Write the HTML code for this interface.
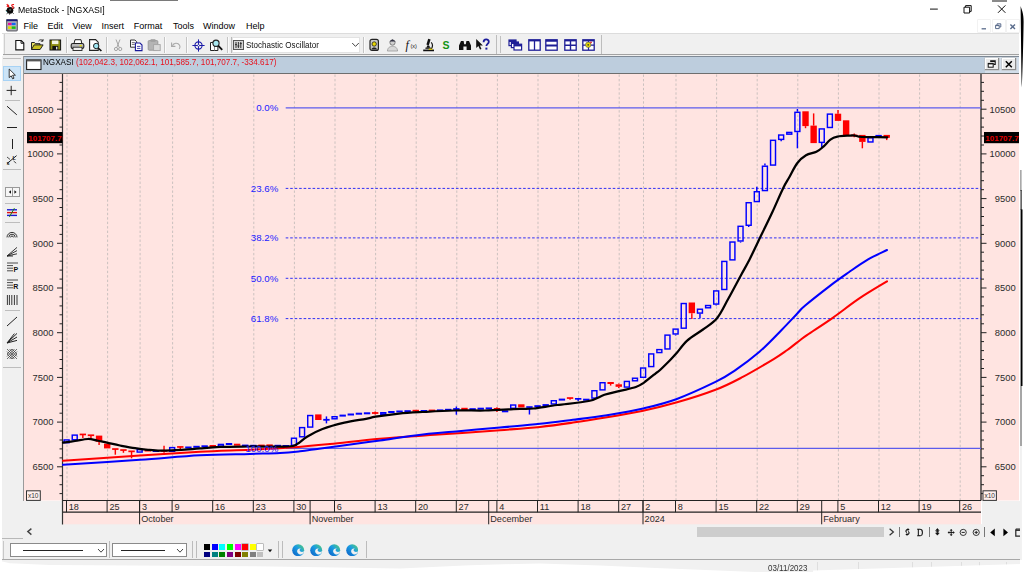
<!DOCTYPE html>
<html><head><meta charset="utf-8"><title>MetaStock - [NGXASI]</title>
<style>
html,body{margin:0;padding:0;background:#fff;}
html{width:1024px;height:572px;overflow:hidden}
body{width:1024px;height:572px;overflow:hidden;position:relative;font-family:"Liberation Sans",sans-serif;font-size:9px;color:#000}
.abs{position:absolute}
.t{position:absolute;white-space:nowrap;line-height:1}
</style></head><body>
<div class="abs" style="left:3px;top:33.6px;width:1016.4px;height:22.4px;background:#f0f0f0;"></div>
<div class="abs" style="left:0px;top:33.2px;width:1019.4px;height:0.8px;background:#dcdcdc;"></div>
<div class="abs" style="left:3px;top:54px;width:1016.4px;height:1.2px;background:#a2a2a2;"></div>
<div class="abs" style="left:2px;top:55.6px;width:22px;height:483px;background:#f0f0f0;"></div>
<div class="abs" style="left:23.2px;top:55.6px;width:0.9px;height:445px;background:#9a9a9a;"></div>
<div class="abs" style="left:2px;top:524.3px;width:1018.3px;height:36px;background:#f0f0f0;"></div>
<div class="abs" style="left:981.6px;top:500.5px;width:38px;height:24px;background:#f0f0f0;"></div>
<div class="abs" style="left:24px;top:500.5px;width:38px;height:24px;background:#f0f0f0;"></div>
<div class="abs" style="left:0px;top:560px;width:1020.3px;height:12px;background:#f1f1f1;"></div>
<div class="abs" style="left:0px;top:559.2px;width:1020.3px;height:0.9px;background:#a8a8a8;"></div>
<div class="abs" style="left:24px;top:55.8px;width:995.4px;height:17px;background:#bdcddd;"></div>
<div class="abs" style="left:984.5px;top:55.8px;width:34.9px;height:17px;background:#d3deea;"></div>
<svg id="chart" width="1024" height="572" viewBox="0 0 1024 572" style="position:absolute;left:0;top:0">
<style>.dt{font:9.1px "Liberation Sans",sans-serif;fill:#2b2b2b} .ax{font:9.4px "Liberation Sans",sans-serif;fill:#2b2b2b} .fib{font:9.7px "Liberation Sans",sans-serif;fill:#1c1cff}</style>
<rect x="24" y="73.5" width="995" height="427.0" fill="#ffe4e1"/>
<line x1="67.0" x2="67.0" y1="74.5" y2="500.5" stroke="#cbc1bf" stroke-width="1" stroke-dasharray="2.4 2.06"/>
<line x1="107.6" x2="107.6" y1="74.5" y2="500.5" stroke="#cbc1bf" stroke-width="1" stroke-dasharray="2.4 2.06"/>
<line x1="140.1" x2="140.1" y1="74.5" y2="500.5" stroke="#cbc1bf" stroke-width="1" stroke-dasharray="2.4 2.06"/>
<line x1="172.6" x2="172.6" y1="74.5" y2="500.5" stroke="#cbc1bf" stroke-width="1" stroke-dasharray="2.4 2.06"/>
<line x1="213.2" x2="213.2" y1="74.5" y2="500.5" stroke="#cbc1bf" stroke-width="1" stroke-dasharray="2.4 2.06"/>
<line x1="253.8" x2="253.8" y1="74.5" y2="500.5" stroke="#cbc1bf" stroke-width="1" stroke-dasharray="2.4 2.06"/>
<line x1="294.4" x2="294.4" y1="74.5" y2="500.5" stroke="#cbc1bf" stroke-width="1" stroke-dasharray="2.4 2.06"/>
<line x1="335.0" x2="335.0" y1="74.5" y2="500.5" stroke="#cbc1bf" stroke-width="1" stroke-dasharray="2.4 2.06"/>
<line x1="375.6" x2="375.6" y1="74.5" y2="500.5" stroke="#cbc1bf" stroke-width="1" stroke-dasharray="2.4 2.06"/>
<line x1="416.2" x2="416.2" y1="74.5" y2="500.5" stroke="#cbc1bf" stroke-width="1" stroke-dasharray="2.4 2.06"/>
<line x1="456.8" x2="456.8" y1="74.5" y2="500.5" stroke="#cbc1bf" stroke-width="1" stroke-dasharray="2.4 2.06"/>
<line x1="497.4" x2="497.4" y1="74.5" y2="500.5" stroke="#cbc1bf" stroke-width="1" stroke-dasharray="2.4 2.06"/>
<line x1="538.0" x2="538.0" y1="74.5" y2="500.5" stroke="#cbc1bf" stroke-width="1" stroke-dasharray="2.4 2.06"/>
<line x1="578.6" x2="578.6" y1="74.5" y2="500.5" stroke="#cbc1bf" stroke-width="1" stroke-dasharray="2.4 2.06"/>
<line x1="619.2" x2="619.2" y1="74.5" y2="500.5" stroke="#cbc1bf" stroke-width="1" stroke-dasharray="2.4 2.06"/>
<line x1="643.5" x2="643.5" y1="74.5" y2="500.5" stroke="#cbc1bf" stroke-width="1" stroke-dasharray="2.4 2.06"/>
<line x1="676.0" x2="676.0" y1="74.5" y2="500.5" stroke="#cbc1bf" stroke-width="1" stroke-dasharray="2.4 2.06"/>
<line x1="716.6" x2="716.6" y1="74.5" y2="500.5" stroke="#cbc1bf" stroke-width="1" stroke-dasharray="2.4 2.06"/>
<line x1="757.2" x2="757.2" y1="74.5" y2="500.5" stroke="#cbc1bf" stroke-width="1" stroke-dasharray="2.4 2.06"/>
<line x1="797.8" x2="797.8" y1="74.5" y2="500.5" stroke="#cbc1bf" stroke-width="1" stroke-dasharray="2.4 2.06"/>
<line x1="838.4" x2="838.4" y1="74.5" y2="500.5" stroke="#cbc1bf" stroke-width="1" stroke-dasharray="2.4 2.06"/>
<line x1="879.0" x2="879.0" y1="74.5" y2="500.5" stroke="#cbc1bf" stroke-width="1" stroke-dasharray="2.4 2.06"/>
<line x1="919.6" x2="919.6" y1="74.5" y2="500.5" stroke="#cbc1bf" stroke-width="1" stroke-dasharray="2.4 2.06"/>
<line x1="960.2" x2="960.2" y1="74.5" y2="500.5" stroke="#cbc1bf" stroke-width="1" stroke-dasharray="2.4 2.06"/>
<rect x="62.5" y="500.5" width="918.5" height="23.799999999999955" fill="#ffe4e1"/>
<line x1="62.5" x2="981.0" y1="500.5" y2="500.5" stroke="#222" stroke-width="1.2"/>
<line x1="62.5" x2="981.0" y1="512.2" y2="512.2" stroke="#222" stroke-width="1.2"/>
<line x1="66.5" x2="66.5" y1="500.5" y2="512.2" stroke="#222" stroke-width="1"/>
<text x="68.8" y="510.3" class="dt">18</text>
<line x1="107.1" x2="107.1" y1="500.5" y2="512.2" stroke="#222" stroke-width="1"/>
<text x="109.4" y="510.3" class="dt">25</text>
<line x1="139.6" x2="139.6" y1="500.5" y2="512.2" stroke="#222" stroke-width="1"/>
<text x="141.9" y="510.3" class="dt">3</text>
<line x1="172.1" x2="172.1" y1="500.5" y2="512.2" stroke="#222" stroke-width="1"/>
<text x="174.4" y="510.3" class="dt">9</text>
<line x1="212.7" x2="212.7" y1="500.5" y2="512.2" stroke="#222" stroke-width="1"/>
<text x="215.0" y="510.3" class="dt">16</text>
<line x1="253.3" x2="253.3" y1="500.5" y2="512.2" stroke="#222" stroke-width="1"/>
<text x="255.6" y="510.3" class="dt">23</text>
<line x1="293.9" x2="293.9" y1="500.5" y2="512.2" stroke="#222" stroke-width="1"/>
<text x="296.2" y="510.3" class="dt">30</text>
<line x1="334.5" x2="334.5" y1="500.5" y2="512.2" stroke="#222" stroke-width="1"/>
<text x="336.8" y="510.3" class="dt">6</text>
<line x1="375.1" x2="375.1" y1="500.5" y2="512.2" stroke="#222" stroke-width="1"/>
<text x="377.4" y="510.3" class="dt">13</text>
<line x1="415.7" x2="415.7" y1="500.5" y2="512.2" stroke="#222" stroke-width="1"/>
<text x="418.0" y="510.3" class="dt">20</text>
<line x1="456.3" x2="456.3" y1="500.5" y2="512.2" stroke="#222" stroke-width="1"/>
<text x="458.6" y="510.3" class="dt">27</text>
<line x1="496.9" x2="496.9" y1="500.5" y2="512.2" stroke="#222" stroke-width="1"/>
<text x="499.2" y="510.3" class="dt">4</text>
<line x1="537.5" x2="537.5" y1="500.5" y2="512.2" stroke="#222" stroke-width="1"/>
<text x="539.8" y="510.3" class="dt">11</text>
<line x1="578.1" x2="578.1" y1="500.5" y2="512.2" stroke="#222" stroke-width="1"/>
<text x="580.4" y="510.3" class="dt">18</text>
<line x1="618.7" x2="618.7" y1="500.5" y2="512.2" stroke="#222" stroke-width="1"/>
<text x="621.0" y="510.3" class="dt">27</text>
<line x1="643.0" x2="643.0" y1="500.5" y2="512.2" stroke="#222" stroke-width="1"/>
<text x="645.3" y="510.3" class="dt">2</text>
<line x1="675.5" x2="675.5" y1="500.5" y2="512.2" stroke="#222" stroke-width="1"/>
<text x="677.8" y="510.3" class="dt">8</text>
<line x1="716.1" x2="716.1" y1="500.5" y2="512.2" stroke="#222" stroke-width="1"/>
<text x="718.4" y="510.3" class="dt">15</text>
<line x1="756.7" x2="756.7" y1="500.5" y2="512.2" stroke="#222" stroke-width="1"/>
<text x="759.0" y="510.3" class="dt">22</text>
<line x1="797.3" x2="797.3" y1="500.5" y2="512.2" stroke="#222" stroke-width="1"/>
<text x="799.6" y="510.3" class="dt">29</text>
<line x1="837.9" x2="837.9" y1="500.5" y2="512.2" stroke="#222" stroke-width="1"/>
<text x="840.2" y="510.3" class="dt">5</text>
<line x1="878.5" x2="878.5" y1="500.5" y2="512.2" stroke="#222" stroke-width="1"/>
<text x="880.8" y="510.3" class="dt">12</text>
<line x1="919.1" x2="919.1" y1="500.5" y2="512.2" stroke="#222" stroke-width="1"/>
<text x="921.4" y="510.3" class="dt">19</text>
<line x1="959.7" x2="959.7" y1="500.5" y2="512.2" stroke="#222" stroke-width="1"/>
<text x="962.0" y="510.3" class="dt">26</text>
<line x1="139.6" x2="139.6" y1="500.5" y2="524.3" stroke="#222" stroke-width="1"/>
<text x="141.2" y="522.3" class="dt">October</text>
<line x1="310.1" x2="310.1" y1="500.5" y2="524.3" stroke="#222" stroke-width="1"/>
<text x="311.7" y="522.3" class="dt">November</text>
<line x1="488.7" x2="488.7" y1="500.5" y2="524.3" stroke="#222" stroke-width="1"/>
<text x="490.3" y="522.3" class="dt">December</text>
<line x1="643.0" x2="643.0" y1="500.5" y2="524.3" stroke="#222" stroke-width="1"/>
<text x="644.6" y="522.3" class="dt">2024</text>
<line x1="821.7" x2="821.7" y1="500.5" y2="524.3" stroke="#222" stroke-width="1"/>
<text x="823.3" y="522.3" class="dt">February</text>
<line x1="62.5" x2="62.5" y1="73.5" y2="524.5" stroke="#333" stroke-width="1.2"/>
<line x1="981.0" x2="981.0" y1="73.5" y2="500.5" stroke="#222" stroke-width="1.3"/>
<line x1="59.5" x2="62.5" y1="493.6" y2="493.6" stroke="#222" stroke-width="1"/>
<line x1="981.0" x2="984.0" y1="493.6" y2="493.6" stroke="#222" stroke-width="1"/>
<line x1="59.5" x2="62.5" y1="484.7" y2="484.7" stroke="#222" stroke-width="1"/>
<line x1="981.0" x2="984.0" y1="484.7" y2="484.7" stroke="#222" stroke-width="1"/>
<line x1="59.5" x2="62.5" y1="475.7" y2="475.7" stroke="#222" stroke-width="1"/>
<line x1="981.0" x2="984.0" y1="475.7" y2="475.7" stroke="#222" stroke-width="1"/>
<line x1="57.0" x2="62.5" y1="466.8" y2="466.8" stroke="#222" stroke-width="1"/>
<line x1="981.0" x2="986.5" y1="466.8" y2="466.8" stroke="#222" stroke-width="1"/>
<text x="53.4" y="470.1" text-anchor="end" class="ax">6500</text>
<text x="1015.6" y="470.1" text-anchor="end" class="ax">6500</text>
<line x1="59.5" x2="62.5" y1="457.9" y2="457.9" stroke="#222" stroke-width="1"/>
<line x1="981.0" x2="984.0" y1="457.9" y2="457.9" stroke="#222" stroke-width="1"/>
<line x1="59.5" x2="62.5" y1="448.9" y2="448.9" stroke="#222" stroke-width="1"/>
<line x1="981.0" x2="984.0" y1="448.9" y2="448.9" stroke="#222" stroke-width="1"/>
<line x1="59.5" x2="62.5" y1="440.0" y2="440.0" stroke="#222" stroke-width="1"/>
<line x1="981.0" x2="984.0" y1="440.0" y2="440.0" stroke="#222" stroke-width="1"/>
<line x1="59.5" x2="62.5" y1="431.0" y2="431.0" stroke="#222" stroke-width="1"/>
<line x1="981.0" x2="984.0" y1="431.0" y2="431.0" stroke="#222" stroke-width="1"/>
<line x1="57.0" x2="62.5" y1="422.1" y2="422.1" stroke="#222" stroke-width="1"/>
<line x1="981.0" x2="986.5" y1="422.1" y2="422.1" stroke="#222" stroke-width="1"/>
<text x="53.4" y="425.4" text-anchor="end" class="ax">7000</text>
<text x="1015.6" y="425.4" text-anchor="end" class="ax">7000</text>
<line x1="59.5" x2="62.5" y1="413.2" y2="413.2" stroke="#222" stroke-width="1"/>
<line x1="981.0" x2="984.0" y1="413.2" y2="413.2" stroke="#222" stroke-width="1"/>
<line x1="59.5" x2="62.5" y1="404.2" y2="404.2" stroke="#222" stroke-width="1"/>
<line x1="981.0" x2="984.0" y1="404.2" y2="404.2" stroke="#222" stroke-width="1"/>
<line x1="59.5" x2="62.5" y1="395.3" y2="395.3" stroke="#222" stroke-width="1"/>
<line x1="981.0" x2="984.0" y1="395.3" y2="395.3" stroke="#222" stroke-width="1"/>
<line x1="59.5" x2="62.5" y1="386.3" y2="386.3" stroke="#222" stroke-width="1"/>
<line x1="981.0" x2="984.0" y1="386.3" y2="386.3" stroke="#222" stroke-width="1"/>
<line x1="57.0" x2="62.5" y1="377.4" y2="377.4" stroke="#222" stroke-width="1"/>
<line x1="981.0" x2="986.5" y1="377.4" y2="377.4" stroke="#222" stroke-width="1"/>
<text x="53.4" y="380.7" text-anchor="end" class="ax">7500</text>
<text x="1015.6" y="380.7" text-anchor="end" class="ax">7500</text>
<line x1="59.5" x2="62.5" y1="368.5" y2="368.5" stroke="#222" stroke-width="1"/>
<line x1="981.0" x2="984.0" y1="368.5" y2="368.5" stroke="#222" stroke-width="1"/>
<line x1="59.5" x2="62.5" y1="359.5" y2="359.5" stroke="#222" stroke-width="1"/>
<line x1="981.0" x2="984.0" y1="359.5" y2="359.5" stroke="#222" stroke-width="1"/>
<line x1="59.5" x2="62.5" y1="350.6" y2="350.6" stroke="#222" stroke-width="1"/>
<line x1="981.0" x2="984.0" y1="350.6" y2="350.6" stroke="#222" stroke-width="1"/>
<line x1="59.5" x2="62.5" y1="341.6" y2="341.6" stroke="#222" stroke-width="1"/>
<line x1="981.0" x2="984.0" y1="341.6" y2="341.6" stroke="#222" stroke-width="1"/>
<line x1="57.0" x2="62.5" y1="332.7" y2="332.7" stroke="#222" stroke-width="1"/>
<line x1="981.0" x2="986.5" y1="332.7" y2="332.7" stroke="#222" stroke-width="1"/>
<text x="53.4" y="336.0" text-anchor="end" class="ax">8000</text>
<text x="1015.6" y="336.0" text-anchor="end" class="ax">8000</text>
<line x1="59.5" x2="62.5" y1="323.8" y2="323.8" stroke="#222" stroke-width="1"/>
<line x1="981.0" x2="984.0" y1="323.8" y2="323.8" stroke="#222" stroke-width="1"/>
<line x1="59.5" x2="62.5" y1="314.8" y2="314.8" stroke="#222" stroke-width="1"/>
<line x1="981.0" x2="984.0" y1="314.8" y2="314.8" stroke="#222" stroke-width="1"/>
<line x1="59.5" x2="62.5" y1="305.9" y2="305.9" stroke="#222" stroke-width="1"/>
<line x1="981.0" x2="984.0" y1="305.9" y2="305.9" stroke="#222" stroke-width="1"/>
<line x1="59.5" x2="62.5" y1="296.9" y2="296.9" stroke="#222" stroke-width="1"/>
<line x1="981.0" x2="984.0" y1="296.9" y2="296.9" stroke="#222" stroke-width="1"/>
<line x1="57.0" x2="62.5" y1="288.0" y2="288.0" stroke="#222" stroke-width="1"/>
<line x1="981.0" x2="986.5" y1="288.0" y2="288.0" stroke="#222" stroke-width="1"/>
<text x="53.4" y="291.3" text-anchor="end" class="ax">8500</text>
<text x="1015.6" y="291.3" text-anchor="end" class="ax">8500</text>
<line x1="59.5" x2="62.5" y1="279.1" y2="279.1" stroke="#222" stroke-width="1"/>
<line x1="981.0" x2="984.0" y1="279.1" y2="279.1" stroke="#222" stroke-width="1"/>
<line x1="59.5" x2="62.5" y1="270.1" y2="270.1" stroke="#222" stroke-width="1"/>
<line x1="981.0" x2="984.0" y1="270.1" y2="270.1" stroke="#222" stroke-width="1"/>
<line x1="59.5" x2="62.5" y1="261.2" y2="261.2" stroke="#222" stroke-width="1"/>
<line x1="981.0" x2="984.0" y1="261.2" y2="261.2" stroke="#222" stroke-width="1"/>
<line x1="59.5" x2="62.5" y1="252.2" y2="252.2" stroke="#222" stroke-width="1"/>
<line x1="981.0" x2="984.0" y1="252.2" y2="252.2" stroke="#222" stroke-width="1"/>
<line x1="57.0" x2="62.5" y1="243.3" y2="243.3" stroke="#222" stroke-width="1"/>
<line x1="981.0" x2="986.5" y1="243.3" y2="243.3" stroke="#222" stroke-width="1"/>
<text x="53.4" y="246.6" text-anchor="end" class="ax">9000</text>
<text x="1015.6" y="246.6" text-anchor="end" class="ax">9000</text>
<line x1="59.5" x2="62.5" y1="234.4" y2="234.4" stroke="#222" stroke-width="1"/>
<line x1="981.0" x2="984.0" y1="234.4" y2="234.4" stroke="#222" stroke-width="1"/>
<line x1="59.5" x2="62.5" y1="225.4" y2="225.4" stroke="#222" stroke-width="1"/>
<line x1="981.0" x2="984.0" y1="225.4" y2="225.4" stroke="#222" stroke-width="1"/>
<line x1="59.5" x2="62.5" y1="216.5" y2="216.5" stroke="#222" stroke-width="1"/>
<line x1="981.0" x2="984.0" y1="216.5" y2="216.5" stroke="#222" stroke-width="1"/>
<line x1="59.5" x2="62.5" y1="207.5" y2="207.5" stroke="#222" stroke-width="1"/>
<line x1="981.0" x2="984.0" y1="207.5" y2="207.5" stroke="#222" stroke-width="1"/>
<line x1="57.0" x2="62.5" y1="198.6" y2="198.6" stroke="#222" stroke-width="1"/>
<line x1="981.0" x2="986.5" y1="198.6" y2="198.6" stroke="#222" stroke-width="1"/>
<text x="53.4" y="201.9" text-anchor="end" class="ax">9500</text>
<text x="1015.6" y="201.9" text-anchor="end" class="ax">9500</text>
<line x1="59.5" x2="62.5" y1="189.7" y2="189.7" stroke="#222" stroke-width="1"/>
<line x1="981.0" x2="984.0" y1="189.7" y2="189.7" stroke="#222" stroke-width="1"/>
<line x1="59.5" x2="62.5" y1="180.7" y2="180.7" stroke="#222" stroke-width="1"/>
<line x1="981.0" x2="984.0" y1="180.7" y2="180.7" stroke="#222" stroke-width="1"/>
<line x1="59.5" x2="62.5" y1="171.8" y2="171.8" stroke="#222" stroke-width="1"/>
<line x1="981.0" x2="984.0" y1="171.8" y2="171.8" stroke="#222" stroke-width="1"/>
<line x1="59.5" x2="62.5" y1="162.8" y2="162.8" stroke="#222" stroke-width="1"/>
<line x1="981.0" x2="984.0" y1="162.8" y2="162.8" stroke="#222" stroke-width="1"/>
<line x1="57.0" x2="62.5" y1="153.9" y2="153.9" stroke="#222" stroke-width="1"/>
<line x1="981.0" x2="986.5" y1="153.9" y2="153.9" stroke="#222" stroke-width="1"/>
<text x="53.4" y="157.2" text-anchor="end" class="ax">10000</text>
<text x="1015.6" y="157.2" text-anchor="end" class="ax">10000</text>
<line x1="59.5" x2="62.5" y1="145.0" y2="145.0" stroke="#222" stroke-width="1"/>
<line x1="981.0" x2="984.0" y1="145.0" y2="145.0" stroke="#222" stroke-width="1"/>
<line x1="59.5" x2="62.5" y1="136.0" y2="136.0" stroke="#222" stroke-width="1"/>
<line x1="981.0" x2="984.0" y1="136.0" y2="136.0" stroke="#222" stroke-width="1"/>
<line x1="59.5" x2="62.5" y1="127.1" y2="127.1" stroke="#222" stroke-width="1"/>
<line x1="981.0" x2="984.0" y1="127.1" y2="127.1" stroke="#222" stroke-width="1"/>
<line x1="59.5" x2="62.5" y1="118.1" y2="118.1" stroke="#222" stroke-width="1"/>
<line x1="981.0" x2="984.0" y1="118.1" y2="118.1" stroke="#222" stroke-width="1"/>
<line x1="57.0" x2="62.5" y1="109.2" y2="109.2" stroke="#222" stroke-width="1"/>
<line x1="981.0" x2="986.5" y1="109.2" y2="109.2" stroke="#222" stroke-width="1"/>
<text x="53.4" y="112.5" text-anchor="end" class="ax">10500</text>
<text x="1015.6" y="112.5" text-anchor="end" class="ax">10500</text>
<line x1="59.5" x2="62.5" y1="100.3" y2="100.3" stroke="#222" stroke-width="1"/>
<line x1="981.0" x2="984.0" y1="100.3" y2="100.3" stroke="#222" stroke-width="1"/>
<line x1="59.5" x2="62.5" y1="91.3" y2="91.3" stroke="#222" stroke-width="1"/>
<line x1="981.0" x2="984.0" y1="91.3" y2="91.3" stroke="#222" stroke-width="1"/>
<line x1="59.5" x2="62.5" y1="82.4" y2="82.4" stroke="#222" stroke-width="1"/>
<line x1="981.0" x2="984.0" y1="82.4" y2="82.4" stroke="#222" stroke-width="1"/>
<line x1="285.7" x2="981.0" y1="107.8" y2="107.8" stroke="#5c5cec" stroke-width="1.35"/>
<text x="278.3" y="111.2" text-anchor="end" class="fib">0.0%</text>
<line x1="285.7" x2="981.0" y1="188.4" y2="188.4" stroke="#3030f4" stroke-width="1" stroke-dasharray="2.6 1.88"/>
<text x="278.3" y="191.8" text-anchor="end" class="fib">23.6%</text>
<line x1="285.7" x2="981.0" y1="237.9" y2="237.9" stroke="#3030f4" stroke-width="1" stroke-dasharray="2.6 1.88"/>
<text x="278.3" y="241.3" text-anchor="end" class="fib">38.2%</text>
<line x1="285.7" x2="981.0" y1="278.3" y2="278.3" stroke="#3030f4" stroke-width="1" stroke-dasharray="2.6 1.88"/>
<text x="278.3" y="281.7" text-anchor="end" class="fib">50.0%</text>
<line x1="285.7" x2="981.0" y1="318.6" y2="318.6" stroke="#3030f4" stroke-width="1" stroke-dasharray="2.6 1.88"/>
<text x="278.3" y="322.0" text-anchor="end" class="fib">61.8%</text>
<line x1="285.7" x2="981.0" y1="448.4" y2="448.4" stroke="#5c5cec" stroke-width="1.35"/>
<g>
<rect x="64.12" y="439.93" width="4.95" height="2.75" fill="none" stroke="#0000ff" stroke-width="1.45"/>
<rect x="72.24" y="435.12" width="4.95" height="4.65" fill="none" stroke="#0000ff" stroke-width="1.45"/>
<rect x="79.64" y="433.60" width="6.40" height="1.7" fill="#ff0000"/>
<line x1="82.84" x2="82.84" y1="434.40" y2="438.00" stroke="#ff0000" stroke-width="1.45"/>
<rect x="87.76" y="434.40" width="6.40" height="1.7" fill="#ff0000"/>
<line x1="90.96" x2="90.96" y1="435.20" y2="438.40" stroke="#ff0000" stroke-width="1.45"/>
<rect x="95.88" y="435.60" width="6.40" height="6.30" fill="#ff0000"/>
<line x1="99.08" x2="99.08" y1="441.90" y2="445.00" stroke="#ff0000" stroke-width="1.45"/>
<rect x="104.00" y="443.70" width="6.40" height="4.70" fill="#ff0000"/>
<rect x="112.12" y="448.20" width="6.40" height="1.7" fill="#ff0000"/>
<line x1="115.32" x2="115.32" y1="449.00" y2="454.70" stroke="#ff0000" stroke-width="1.45"/>
<rect x="120.24" y="449.20" width="6.40" height="1.7" fill="#ff0000"/>
<line x1="123.44" x2="123.44" y1="450.00" y2="452.80" stroke="#ff0000" stroke-width="1.45"/>
<rect x="128.36" y="450.50" width="6.40" height="1.7" fill="#ff0000"/>
<line x1="131.56" x2="131.56" y1="451.30" y2="458.30" stroke="#ff0000" stroke-width="1.45"/>
<rect x="137.20" y="449.62" width="4.95" height="2.45" fill="none" stroke="#0000ff" stroke-width="1.45"/>
<rect x="144.60" y="449.50" width="6.40" height="2" fill="#ff0000"/>
<rect x="152.72" y="450.00" width="6.40" height="2" fill="#0000ff"/>
<rect x="160.84" y="449.90" width="6.40" height="1.8" fill="#ff0000"/>
<line x1="164.04" x2="164.04" y1="445.80" y2="452.80" stroke="#ff0000" stroke-width="1.45"/>
<rect x="169.69" y="447.62" width="4.95" height="3.65" fill="none" stroke="#0000ff" stroke-width="1.45"/>
<rect x="177.08" y="446.10" width="6.40" height="1.7" fill="#ff0000"/>
<line x1="180.28" x2="180.28" y1="446.90" y2="449.70" stroke="#ff0000" stroke-width="1.45"/>
<rect x="185.20" y="446.50" width="6.40" height="2" fill="#0000ff"/>
<rect x="193.32" y="445.80" width="6.40" height="2" fill="#0000ff"/>
<rect x="201.44" y="445.30" width="6.40" height="2" fill="#0000ff"/>
<rect x="209.56" y="445.00" width="6.40" height="2" fill="#ff0000"/>
<rect x="218.40" y="444.43" width="4.95" height="1.75" fill="none" stroke="#0000ff" stroke-width="1.45"/>
<rect x="225.80" y="443.00" width="6.40" height="2" fill="#0000ff"/>
<rect x="233.92" y="443.70" width="6.40" height="2" fill="#ff0000"/>
<rect x="242.04" y="444.60" width="6.40" height="2" fill="#0000ff"/>
<rect x="250.16" y="444.80" width="6.40" height="2" fill="#0000ff"/>
<rect x="258.28" y="444.60" width="6.40" height="2" fill="#ff0000"/>
<rect x="266.40" y="444.40" width="6.40" height="2" fill="#ff0000"/>
<rect x="274.52" y="444.80" width="6.40" height="2" fill="#0000ff"/>
<rect x="282.64" y="445.00" width="6.40" height="2" fill="#0000ff"/>
<rect x="291.49" y="438.23" width="4.95" height="7.05" fill="none" stroke="#0000ff" stroke-width="1.45"/>
<rect x="299.61" y="427.62" width="4.95" height="9.15" fill="none" stroke="#0000ff" stroke-width="1.45"/>
<rect x="307.73" y="415.53" width="4.95" height="11.55" fill="none" stroke="#0000ff" stroke-width="1.45"/>
<rect x="315.12" y="414.40" width="6.40" height="5.60" fill="#ff0000"/>
<rect x="323.24" y="418.90" width="6.40" height="1.8" fill="#0000ff"/>
<line x1="326.44" x2="326.44" y1="416.40" y2="423.40" stroke="#0000ff" stroke-width="1.45"/>
<rect x="332.09" y="416.73" width="4.95" height="2.05" fill="none" stroke="#0000ff" stroke-width="1.45"/>
<rect x="339.48" y="414.60" width="6.40" height="2" fill="#0000ff"/>
<rect x="347.60" y="413.50" width="6.40" height="2" fill="#0000ff"/>
<rect x="355.72" y="412.70" width="6.40" height="2" fill="#0000ff"/>
<rect x="363.84" y="412.30" width="6.40" height="2" fill="#0000ff"/>
<rect x="371.96" y="412.10" width="6.40" height="1.8" fill="#ff0000"/>
<line x1="375.16" x2="375.16" y1="411.50" y2="414.50" stroke="#ff0000" stroke-width="1.45"/>
<rect x="380.81" y="412.73" width="4.95" height="1.55" fill="none" stroke="#0000ff" stroke-width="1.45"/>
<rect x="388.20" y="411.00" width="6.40" height="2" fill="#0000ff"/>
<rect x="396.32" y="410.50" width="6.40" height="2" fill="#0000ff"/>
<rect x="404.44" y="410.20" width="6.40" height="2" fill="#0000ff"/>
<rect x="412.56" y="409.80" width="6.40" height="1.7" fill="#ff0000"/>
<line x1="415.76" x2="415.76" y1="410.60" y2="412.20" stroke="#ff0000" stroke-width="1.45"/>
<rect x="420.68" y="410.00" width="6.40" height="2" fill="#0000ff"/>
<rect x="428.80" y="409.60" width="6.40" height="2" fill="#ff0000"/>
<rect x="436.92" y="409.40" width="6.40" height="2" fill="#0000ff"/>
<rect x="445.04" y="408.80" width="6.40" height="2" fill="#0000ff"/>
<rect x="453.16" y="408.10" width="6.40" height="1.8" fill="#0000ff"/>
<line x1="456.36" x2="456.36" y1="406.50" y2="414.70" stroke="#0000ff" stroke-width="1.45"/>
<rect x="461.28" y="407.80" width="6.40" height="3.20" fill="#ff0000"/>
<rect x="469.40" y="408.20" width="6.40" height="2" fill="#0000ff"/>
<rect x="477.52" y="407.70" width="6.40" height="2" fill="#0000ff"/>
<rect x="485.64" y="407.40" width="6.40" height="2" fill="#0000ff"/>
<rect x="493.76" y="408.00" width="6.40" height="3.00" fill="#ff0000"/>
<line x1="496.96" x2="496.96" y1="407.30" y2="408.00" stroke="#ff0000" stroke-width="1.45"/>
<line x1="496.96" x2="496.96" y1="411.00" y2="412.00" stroke="#ff0000" stroke-width="1.45"/>
<rect x="501.88" y="410.30" width="6.40" height="2" fill="#0000ff"/>
<rect x="510.72" y="405.03" width="4.95" height="3.25" fill="none" stroke="#0000ff" stroke-width="1.45"/>
<rect x="518.12" y="404.30" width="6.40" height="3.10" fill="#ff0000"/>
<rect x="526.24" y="406.20" width="6.40" height="1.7" fill="#0000ff"/>
<line x1="529.44" x2="529.44" y1="407.00" y2="414.50" stroke="#0000ff" stroke-width="1.45"/>
<rect x="534.36" y="405.20" width="6.40" height="2" fill="#0000ff"/>
<rect x="542.48" y="404.10" width="6.40" height="2" fill="#0000ff"/>
<rect x="551.32" y="400.73" width="4.95" height="3.25" fill="none" stroke="#0000ff" stroke-width="1.45"/>
<rect x="558.72" y="398.60" width="6.40" height="2" fill="#0000ff"/>
<rect x="566.84" y="397.20" width="6.40" height="1.7" fill="#ff0000"/>
<line x1="570.04" x2="570.04" y1="398.00" y2="399.80" stroke="#ff0000" stroke-width="1.45"/>
<rect x="574.96" y="398.00" width="6.40" height="1.7" fill="#0000ff"/>
<line x1="578.16" x2="578.16" y1="398.80" y2="401.00" stroke="#0000ff" stroke-width="1.45"/>
<rect x="583.08" y="398.70" width="6.40" height="2" fill="#0000ff"/>
<rect x="591.92" y="390.73" width="4.95" height="7.35" fill="none" stroke="#0000ff" stroke-width="1.45"/>
<rect x="600.04" y="382.73" width="4.95" height="7.15" fill="none" stroke="#0000ff" stroke-width="1.45"/>
<rect x="607.44" y="382.00" width="6.40" height="2.00" fill="#ff0000"/>
<line x1="610.64" x2="610.64" y1="384.00" y2="385.60" stroke="#ff0000" stroke-width="1.45"/>
<rect x="615.56" y="384.30" width="6.40" height="2.50" fill="#ff0000"/>
<line x1="618.76" x2="618.76" y1="383.60" y2="384.30" stroke="#ff0000" stroke-width="1.45"/>
<line x1="618.76" x2="618.76" y1="386.80" y2="388.00" stroke="#ff0000" stroke-width="1.45"/>
<rect x="624.40" y="381.43" width="4.95" height="5.65" fill="none" stroke="#0000ff" stroke-width="1.45"/>
<rect x="632.52" y="378.23" width="4.95" height="2.55" fill="none" stroke="#0000ff" stroke-width="1.45"/>
<rect x="640.64" y="368.03" width="4.95" height="9.25" fill="none" stroke="#0000ff" stroke-width="1.45"/>
<rect x="648.76" y="353.93" width="4.95" height="12.65" fill="none" stroke="#0000ff" stroke-width="1.45"/>
<rect x="656.88" y="349.62" width="4.95" height="2.95" fill="none" stroke="#0000ff" stroke-width="1.45"/>
<rect x="665.00" y="335.12" width="4.95" height="13.85" fill="none" stroke="#0000ff" stroke-width="1.45"/>
<rect x="673.12" y="329.12" width="4.95" height="4.85" fill="none" stroke="#0000ff" stroke-width="1.45"/>
<line x1="675.60" x2="675.60" y1="334.70" y2="335.50" stroke="#0000ff" stroke-width="1.45"/>
<rect x="681.24" y="303.53" width="4.95" height="24.65" fill="none" stroke="#0000ff" stroke-width="1.45"/>
<rect x="688.64" y="302.50" width="6.40" height="10.70" fill="#ff0000"/>
<line x1="691.84" x2="691.84" y1="313.20" y2="319.00" stroke="#ff0000" stroke-width="1.45"/>
<rect x="697.48" y="309.23" width="4.95" height="3.85" fill="none" stroke="#0000ff" stroke-width="1.45"/>
<line x1="699.96" x2="699.96" y1="313.80" y2="317.90" stroke="#0000ff" stroke-width="1.45"/>
<rect x="705.60" y="305.53" width="4.95" height="2.25" fill="none" stroke="#0000ff" stroke-width="1.45"/>
<rect x="713.72" y="290.93" width="4.95" height="13.15" fill="none" stroke="#0000ff" stroke-width="1.45"/>
<line x1="716.20" x2="716.20" y1="304.80" y2="305.60" stroke="#0000ff" stroke-width="1.45"/>
<rect x="721.84" y="261.43" width="4.95" height="28.05" fill="none" stroke="#0000ff" stroke-width="1.45"/>
<rect x="729.96" y="242.03" width="4.95" height="17.85" fill="none" stroke="#0000ff" stroke-width="1.45"/>
<rect x="738.08" y="226.32" width="4.95" height="14.65" fill="none" stroke="#0000ff" stroke-width="1.45"/>
<line x1="740.56" x2="740.56" y1="241.70" y2="242.60" stroke="#0000ff" stroke-width="1.45"/>
<rect x="746.20" y="202.72" width="4.95" height="22.55" fill="none" stroke="#0000ff" stroke-width="1.45"/>
<line x1="748.68" x2="748.68" y1="226.00" y2="227.00" stroke="#0000ff" stroke-width="1.45"/>
<rect x="754.32" y="191.72" width="4.95" height="9.85" fill="none" stroke="#0000ff" stroke-width="1.45"/>
<line x1="756.80" x2="756.80" y1="186.70" y2="191.00" stroke="#0000ff" stroke-width="1.45"/>
<rect x="762.44" y="166.22" width="4.95" height="24.35" fill="none" stroke="#0000ff" stroke-width="1.45"/>
<line x1="764.92" x2="764.92" y1="163.40" y2="165.50" stroke="#0000ff" stroke-width="1.45"/>
<rect x="770.56" y="140.32" width="4.95" height="24.75" fill="none" stroke="#0000ff" stroke-width="1.45"/>
<rect x="778.68" y="135.03" width="4.95" height="4.35" fill="none" stroke="#0000ff" stroke-width="1.45"/>
<line x1="781.16" x2="781.16" y1="140.10" y2="141.20" stroke="#0000ff" stroke-width="1.45"/>
<rect x="786.80" y="132.42" width="4.95" height="1.75" fill="none" stroke="#0000ff" stroke-width="1.45"/>
<rect x="794.92" y="112.32" width="4.95" height="19.15" fill="none" stroke="#0000ff" stroke-width="1.45"/>
<line x1="797.40" x2="797.40" y1="109.00" y2="111.60" stroke="#0000ff" stroke-width="1.45"/>
<line x1="797.40" x2="797.40" y1="132.20" y2="148.30" stroke="#0000ff" stroke-width="1.45"/>
<rect x="802.32" y="111.30" width="6.40" height="14.80" fill="#ff0000"/>
<line x1="805.52" x2="805.52" y1="126.10" y2="128.20" stroke="#ff0000" stroke-width="1.45"/>
<rect x="810.44" y="125.60" width="6.40" height="17.50" fill="#ff0000"/>
<line x1="813.64" x2="813.64" y1="113.40" y2="125.60" stroke="#ff0000" stroke-width="1.45"/>
<rect x="819.28" y="128.92" width="4.95" height="13.45" fill="none" stroke="#0000ff" stroke-width="1.45"/>
<line x1="821.76" x2="821.76" y1="143.10" y2="148.30" stroke="#0000ff" stroke-width="1.45"/>
<rect x="827.40" y="114.12" width="4.95" height="13.35" fill="none" stroke="#0000ff" stroke-width="1.45"/>
<rect x="834.80" y="113.70" width="6.40" height="7.20" fill="#ff0000"/>
<line x1="838.00" x2="838.00" y1="109.90" y2="113.70" stroke="#ff0000" stroke-width="1.45"/>
<rect x="842.92" y="120.30" width="6.40" height="14.70" fill="#ff0000"/>
<rect x="851.04" y="134.60" width="6.40" height="1.8" fill="#ff0000"/>
<line x1="854.24" x2="854.24" y1="133.60" y2="137.20" stroke="#ff0000" stroke-width="1.45"/>
<rect x="859.16" y="134.90" width="6.40" height="7.00" fill="#ff0000"/>
<line x1="862.36" x2="862.36" y1="141.90" y2="148.30" stroke="#ff0000" stroke-width="1.45"/>
<rect x="868.00" y="137.72" width="4.95" height="4.25" fill="none" stroke="#0000ff" stroke-width="1.45"/>
<rect x="876.12" y="135.62" width="4.95" height="1.45" fill="none" stroke="#0000ff" stroke-width="1.45"/>
<rect x="883.52" y="134.90" width="6.40" height="2.90" fill="#ff0000"/>
<line x1="886.72" x2="886.72" y1="137.80" y2="140.10" stroke="#ff0000" stroke-width="1.45"/>
</g>
<path d="M63.0 460.8C75.8 459.9 117.2 457.1 140.0 455.6C162.8 454.1 181.7 452.8 200.0 451.8C218.3 450.8 235.0 450.5 250.0 449.8C265.0 449.1 276.7 448.6 290.0 447.6C303.3 446.6 315.0 445.5 330.0 444.0C345.0 442.5 361.9 440.3 380.0 438.7C398.1 437.1 418.6 436.0 438.6 434.6C458.6 433.2 483.1 431.5 500.0 430.2C516.9 428.9 527.8 428.2 540.0 426.9C552.2 425.6 561.8 424.2 573.0 422.6C584.2 421.0 595.5 419.2 607.0 417.3C618.5 415.4 630.5 413.4 642.0 411.0C653.5 408.6 664.0 406.1 676.2 402.6C688.5 399.1 704.5 394.0 715.5 389.8C726.5 385.6 732.6 382.3 742.3 377.2C752.0 372.1 766.2 363.6 773.7 359.1C781.2 354.6 782.9 353.1 787.3 350.0C791.7 346.9 796.7 342.7 800.0 340.2C803.3 337.7 801.9 338.6 807.3 334.9C812.7 331.2 823.7 324.2 832.4 318.1C841.1 312.0 850.6 304.3 859.7 298.2C868.8 292.1 882.5 284.2 887.0 281.4" fill="none" stroke="#ff0000" stroke-width="2.05" stroke-linejoin="round" stroke-linecap="round"/>
<path d="M63.0 464.8C75.8 464.0 117.2 461.4 140.0 459.8C162.8 458.2 181.7 456.3 200.0 455.3C218.3 454.3 236.7 454.3 250.0 453.9C263.3 453.5 271.7 453.4 280.0 453.0C288.3 452.6 293.5 452.0 300.0 451.3C306.5 450.6 311.5 449.7 319.0 448.7C326.5 447.7 334.8 446.6 345.0 445.2C355.2 443.8 368.3 442.0 380.0 440.4C391.7 438.8 402.3 436.9 415.0 435.4C427.7 433.9 441.8 432.7 456.0 431.4C470.2 430.1 486.0 428.8 500.0 427.5C514.0 426.2 527.8 425.1 540.0 423.8C552.2 422.5 561.8 421.2 573.0 419.8C584.2 418.4 595.5 417.1 607.0 415.2C618.5 413.3 630.5 411.4 642.0 408.7C653.5 406.0 664.0 403.7 676.2 399.2C688.5 394.7 705.8 386.6 715.5 381.9C725.2 377.2 727.1 375.9 734.4 370.9C741.7 365.9 751.6 358.6 759.5 351.8C767.4 345.0 775.3 336.4 781.6 330.0C787.9 323.6 793.4 317.6 797.3 313.5C801.2 309.4 799.7 310.1 805.2 305.5C810.7 300.9 823.0 291.2 830.3 285.6C837.6 280.0 842.9 276.4 849.2 272.0C855.5 267.6 861.8 263.1 868.1 259.4C874.4 255.7 883.9 251.6 887.0 250.0" fill="none" stroke="#0000ff" stroke-width="2.05" stroke-linejoin="round" stroke-linecap="round"/>
<path d="M63.0 442.7C65.0 442.4 70.8 441.6 75.0 441.0C79.2 440.4 84.3 439.1 88.0 439.0C91.7 438.9 93.8 439.9 97.0 440.5C100.2 441.1 103.2 441.9 107.0 442.7C110.8 443.5 115.3 444.6 120.0 445.5C124.7 446.4 130.3 447.5 135.0 448.2C139.7 448.9 143.8 449.4 148.0 449.8C152.2 450.2 156.0 450.6 160.0 450.7C164.0 450.8 167.8 450.6 172.0 450.4C176.2 450.2 180.3 449.9 185.0 449.6C189.7 449.3 194.2 448.8 200.0 448.4C205.8 447.9 211.7 447.2 220.0 446.9C228.3 446.6 238.7 446.6 250.0 446.5C261.3 446.4 280.1 447.0 288.0 446.5C295.9 446.0 294.3 445.4 297.5 443.8C300.7 442.1 302.8 439.2 307.0 436.7C311.2 434.2 316.3 431.3 322.5 429.0C328.7 426.7 337.1 424.4 344.4 422.7C351.6 421.0 360.8 419.8 366.0 418.8C371.2 417.8 370.1 417.6 375.6 416.7C381.1 415.8 391.2 414.4 399.0 413.6C406.8 412.8 413.4 412.5 422.5 412.0C431.6 411.5 443.3 410.8 453.8 410.5C464.2 410.2 475.9 410.7 485.0 410.5C494.1 410.3 502.6 409.7 508.4 409.4C514.2 409.1 515.8 408.9 520.0 408.8C524.2 408.7 527.4 409.1 533.6 408.5C539.8 407.9 548.0 406.2 557.2 405.0C566.4 403.8 580.8 402.7 588.7 401.0C596.6 399.3 599.2 396.5 604.4 394.8C609.6 393.1 614.8 392.2 620.0 390.9C625.2 389.6 631.9 388.4 635.9 387.0C639.9 385.6 640.4 385.1 643.7 382.8C647.0 380.5 653.1 375.4 655.7 373.3C658.3 371.2 657.1 372.7 659.5 370.5C661.9 368.3 667.2 363.0 670.0 360.2C672.8 357.4 673.3 356.9 676.2 353.6C679.1 350.3 682.7 344.6 687.2 340.6C691.7 336.6 698.0 333.2 703.0 329.5C708.0 325.8 712.8 323.2 717.0 318.2C721.2 313.2 724.0 306.4 728.0 299.3C732.0 292.2 737.2 282.2 740.7 275.7C744.2 269.1 746.0 266.4 749.3 260.0C752.5 253.6 756.4 245.3 760.2 237.3C764.1 229.3 768.6 220.2 772.4 212.0C776.2 203.8 780.2 194.2 783.0 188.4C785.8 182.6 786.9 181.4 789.3 177.2C791.7 173.0 794.4 166.8 797.2 163.2C800.0 159.5 802.8 157.2 806.0 155.3C809.2 153.4 813.5 153.2 816.4 151.8C819.3 150.4 821.1 148.6 823.4 146.6C825.7 144.6 828.1 141.3 830.4 139.6C832.7 137.9 834.1 137.3 837.4 136.6C840.7 135.9 847.1 135.8 850.0 135.6C852.9 135.4 853.0 135.4 855.0 135.6C857.0 135.8 856.6 136.7 862.0 137.0C867.4 137.3 883.1 137.2 887.3 137.3" fill="none" stroke="#000" stroke-width="2.25" stroke-linejoin="round" stroke-linecap="round"/>
<text x="278.3" y="451.8" text-anchor="end" class="fib">100.0%</text>
<!-- price labels -->
<rect x="27" y="132" width="35.5" height="11.2" fill="#000"/>
<svg x="27" y="132" width="35.5" height="11.2"><text x="1.3" y="8.9" style="font:bold 8px 'Liberation Sans',sans-serif;fill:#e00000">101707.70</text></svg>
<rect x="984" y="132" width="35" height="11.2" fill="#000"/>
<svg x="984" y="132" width="35" height="11.2"><text x="1.3" y="8.9" style="font:bold 8px 'Liberation Sans',sans-serif;fill:#e00000">101707.70</text></svg>
<!-- x10 -->
<rect x="26.5" y="490.8" width="13.8" height="9.6" fill="#fff0ee" stroke="#333" stroke-width="1"/>
<text x="28" y="498.4" style="font:6.5px 'Liberation Sans',sans-serif;fill:#333">x10</text>
<rect x="983" y="490.8" width="13.4" height="9.6" fill="#fff0ee" stroke="#333" stroke-width="1"/>
<text x="984.4" y="498.4" style="font:6.5px 'Liberation Sans',sans-serif;fill:#333">x10</text>
</svg>
<div class="abs" style="left:110px;top:0px;width:67.5px;height:1.3px;background:#7a7a7a;"></div>
<div class="abs" style="left:992px;top:0px;width:15px;height:1.6px;background:#8a8a8a;"></div>
<svg class="abs" style="left:5px;top:3px" width="11" height="12" viewBox="0 0 11 12" ><ellipse cx="5" cy="7.300" rx="3.300" ry="3.400" fill="#0c0c0c"/><path d="M1.600 10.800l1.600-1.400M8.600 10.600l-1.400-1.200M.8 7.400h1.600M7.800 5.600l1.800-.8M4.600 10.400v1.200" stroke="#111" stroke-width=".9"/><circle cx="5.200" cy="6.800" r="1.100" fill="#555"/><path d="M1.800 1.200l2.400 3.200M1.800 3.800l2.200-2M9 1.600c-2-.6-3 .9-1.600 1.700 1.400.7 1.300 2-.500 1.900" fill="none" stroke="#e80c0c" stroke-width="1.100"/><path d="M1.200 8.200l1 .8" stroke="#1a8a8a" stroke-width=".8"/></svg>
<div class="t" style="left:18px;top:5.6px;font-size:9px;color:#000;font-weight:normal;font-family:'Liberation Sans',sans-serif;transform:scaleX(0.968);transform-origin:0 0;">MetaStock - [NGXASI]</div>
<svg class="abs" style="left:926px;top:2px" width="90" height="14" viewBox="0 0 90 14" ><path d="M4 7.1h7.8" stroke="#111" stroke-width="1"/><path d="M38 5.2h5.6v5.8H38zM39.6 5.2V3.6h5.6v5.8h-1.6" fill="none" stroke="#111" stroke-width="1"/><path d="M72 3.4l7.4 7.4M79.4 3.4L72 10.8" stroke="#111" stroke-width="1"/></svg>
<svg class="abs" style="left:5.5px;top:19.2px" width="12" height="12.4" viewBox="0 0 12 12.4" ><rect x=".600" y=".600" width="10.700" height="11.200" rx="1" fill="#b4b4bc" stroke="#6a6a72" stroke-width="1.3"/><rect x=".600" y=".500" width="10.700" height="1.700" fill="#18187c"/><rect x="2" y="3.800" width="3.700" height="2.300" fill="#e8109c"/><rect x="5.700" y="3.800" width="3.900" height="2.300" fill="#1068f0"/><rect x="2" y="7.400" width="3.700" height="2.500" fill="#e4dc00"/><rect x="5.700" y="7.400" width="3.900" height="2.500" fill="#18c018"/></svg>
<div class="t" style="left:23.5px;top:22.2px;font-size:9px;color:#000;font-weight:normal;font-family:'Liberation Sans',sans-serif;">File</div>
<div class="t" style="left:47.5px;top:22.2px;font-size:9px;color:#000;font-weight:normal;font-family:'Liberation Sans',sans-serif;">Edit</div>
<div class="t" style="left:72.5px;top:22.2px;font-size:9px;color:#000;font-weight:normal;font-family:'Liberation Sans',sans-serif;">View</div>
<div class="t" style="left:101.5px;top:22.2px;font-size:9px;color:#000;font-weight:normal;font-family:'Liberation Sans',sans-serif;">Insert</div>
<div class="t" style="left:133.7px;top:22.2px;font-size:9px;color:#000;font-weight:normal;font-family:'Liberation Sans',sans-serif;">Format</div>
<div class="t" style="left:173px;top:22.2px;font-size:9px;color:#000;font-weight:normal;font-family:'Liberation Sans',sans-serif;">Tools</div>
<div class="t" style="left:203px;top:22.2px;font-size:9px;color:#000;font-weight:normal;font-family:'Liberation Sans',sans-serif;">Window</div>
<div class="t" style="left:246px;top:22.2px;font-size:9px;color:#000;font-weight:normal;font-family:'Liberation Sans',sans-serif;">Help</div>
<div class="abs" style="left:978px;top:20px;width:12px;height:12.2px;background:#fff;box-shadow:0 0 0 .6px #e9e9e9"></div>
<div class="abs" style="left:992.5px;top:20px;width:12px;height:12.2px;background:#fff;box-shadow:0 0 0 .6px #e9e9e9"></div>
<div class="abs" style="left:1006.9px;top:20px;width:12px;height:12.2px;background:#fff;box-shadow:0 0 0 .6px #e9e9e9"></div>
<svg class="abs" style="left:978px;top:20px" width="42" height="13" viewBox="0 0 42 13" ><path d="M3.6 8.8h4.4" stroke="#5a6c8c" stroke-width="1.3"/><path d="M17.6 5.6h3.6v3h-3.6zM19 5.4V3.8h3.8v3.2h-1.4" fill="none" stroke="#5a6c8c" stroke-width="1"/><path d="M17.4 5.4h4" stroke="#5a6c8c" stroke-width="1.2"/><path d="M32.4 4.4l4.6 4.6M37 4.4l-4.6 4.6" stroke="#5a6c8c" stroke-width="1.4"/></svg>
<div class="abs" style="left:65.5px;top:36.5px;width:1px;height:16px;background:#c4c4c4;"></div><div class="abs" style="left:66.5px;top:36.5px;width:1px;height:16px;background:#fbfbfb;"></div>
<div class="abs" style="left:105.5px;top:36.5px;width:1px;height:16px;background:#c4c4c4;"></div><div class="abs" style="left:106.5px;top:36.5px;width:1px;height:16px;background:#fbfbfb;"></div>
<div class="abs" style="left:163.5px;top:36.5px;width:1px;height:16px;background:#c4c4c4;"></div><div class="abs" style="left:164.5px;top:36.5px;width:1px;height:16px;background:#fbfbfb;"></div>
<div class="abs" style="left:186.2px;top:36.5px;width:1px;height:16px;background:#c4c4c4;"></div><div class="abs" style="left:187.2px;top:36.5px;width:1px;height:16px;background:#fbfbfb;"></div>
<div class="abs" style="left:226.5px;top:36.5px;width:1px;height:16px;background:#c4c4c4;"></div><div class="abs" style="left:227.5px;top:36.5px;width:1px;height:16px;background:#fbfbfb;"></div>
<div class="abs" style="left:362.5px;top:36.5px;width:1px;height:16px;background:#c4c4c4;"></div><div class="abs" style="left:363.5px;top:36.5px;width:1px;height:16px;background:#fbfbfb;"></div>
<div class="abs" style="left:496px;top:35px;width:1px;height:19px;background:#bdbdbd;"></div>
<div class="abs" style="left:500px;top:36px;width:1px;height:17px;background:#c0c0c0;"></div>
<div class="abs" style="left:601px;top:35px;width:1px;height:19px;background:#bdbdbd;"></div>
<div class="abs" style="left:3.5px;top:34px;width:0.8px;height:20px;background:#d0d0d0;"></div>
<svg class="abs" style="left:14px;top:39px" width="12" height="12" viewBox="0 0 12 12" ><path d="M1.8 1.5h5.4l2.6 2.6v6.8h-8z" fill="#fff" stroke="#111" stroke-width="1.1"/><path d="M7 1.5v2.8h2.8" fill="none" stroke="#111" stroke-width=".9"/></svg>
<svg class="abs" style="left:30px;top:38px" width="15" height="13" viewBox="0 0 15 13" ><path d="M1.5 11.5v-7h3l1 1.2h4.5v2" fill="#e8e060" stroke="#222" stroke-width="1"/><path d="M1.5 11.5l2.6-4.6h9l-3 4.6z" fill="#c8c020" stroke="#222" stroke-width="1"/><path d="M8.5 3c1.4-1.6 3.2-1.6 4.4-.2M13 1v2.2h-2.2" fill="none" stroke="#222" stroke-width=".9"/></svg>
<svg class="abs" style="left:49px;top:39px" width="13" height="12" viewBox="0 0 13 12" ><rect x="1" y="1" width="10.6" height="10" fill="#8a8a10" stroke="#111" stroke-width="1"/><rect x="3" y="1.5" width="6.4" height="3.6" fill="#f4f4e0"/><rect x="3.4" y="7" width="5.8" height="4" fill="#111"/><rect x="7" y="7.8" width="1.4" height="2.6" fill="#ddd"/></svg>
<svg class="abs" style="left:70px;top:38px" width="15" height="14" viewBox="0 0 15 14" ><path d="M4 5.5l1-3.8h6l.8 3.8" fill="#fff" stroke="#222" stroke-width="1"/><rect x="1.2" y="5.5" width="12.6" height="5" rx="1.6" fill="#b8b8b8" stroke="#222" stroke-width="1.1"/><rect x="3" y="9.2" width="9" height="3.3" fill="#eee" stroke="#222" stroke-width=".9"/><rect x="9.6" y="7" width="2.2" height="1.3" fill="#e8e000"/></svg>
<svg class="abs" style="left:88px;top:38px" width="15" height="14" viewBox="0 0 15 14" ><path d="M1.6 1.6h6l2.6 2.6v8.2h-8.6z" fill="#fff" stroke="#222" stroke-width="1.1"/><circle cx="8.2" cy="8" r="2.7" fill="#9fe6f2" stroke="#222" stroke-width="1"/><path d="M10.2 10l3.2 3" stroke="#111" stroke-width="1.7"/></svg>
<svg class="abs" style="left:112px;top:38px" width="12" height="14" viewBox="0 0 12 14" ><path d="M4 1.5l3.2 8M8 1.5l-3.2 8" stroke="#a4a4a4" stroke-width="1" fill="none"/><circle cx="4" cy="11" r="1.6" fill="none" stroke="#a4a4a4" stroke-width="1"/><circle cx="8.2" cy="11" r="1.6" fill="none" stroke="#a4a4a4" stroke-width="1"/></svg>
<svg class="abs" style="left:129px;top:38px" width="15" height="14" viewBox="0 0 15 14" ><path d="M1.5 2h4.4l1.8 1.8v5.4h-6.2z" fill="#fff" stroke="#333" stroke-width="1"/><path d="M2.8 4.6h3M2.8 6.4h3" stroke="#333" stroke-width=".7"/><path d="M6.4 5h4.6l2 2v5.6h-6.6z" fill="#fff" stroke="#1a1a9a" stroke-width="1.1"/><path d="M8 8.4h3.4M8 10.4h3.4" stroke="#1a1a9a" stroke-width=".8"/></svg>
<svg class="abs" style="left:147px;top:38px" width="15" height="14" viewBox="0 0 15 14" ><rect x="1.2" y="2.6" width="9.6" height="9.6" rx="1" fill="#b4b4b4" stroke="#9a9a9a"/><rect x="3.6" y="1.2" width="4.8" height="2.6" fill="#a0a0a0"/><rect x="6.6" y="6.6" width="6.6" height="6" fill="#d8d8d8" stroke="#a4a4a4" stroke-width=".9"/></svg>
<svg class="abs" style="left:170px;top:39px" width="13" height="12" viewBox="0 0 13 12" ><path d="M2.4 6.8c1.2-3 5.4-3.4 7.2-.6c.8 1.4.4 2.8-.4 3.6" fill="none" stroke="#a8a8a8" stroke-width="1.1"/><path d="M1.6 3.6v3.8h3.8" fill="none" stroke="#a8a8a8" stroke-width="1.1"/></svg>
<svg class="abs" style="left:192px;top:38.5px" width="13" height="13" viewBox="0 0 13 13" ><circle cx="6.5" cy="6.5" r="3.6" fill="none" stroke="#1c1ca8" stroke-width="1.1"/><path d="M6.5 0.4v12.2M0.4 6.5h12.2" stroke="#1c1ca8" stroke-width="1"/><circle cx="6.5" cy="6.5" r="1" fill="#f0f0f0" stroke="#1c1ca8" stroke-width=".6"/></svg>
<svg class="abs" style="left:209px;top:38px" width="15" height="14" viewBox="0 0 15 14" ><path d="M1.5 4.5h4v8h-4z" fill="#fff" stroke="#222" stroke-width="1"/><path d="M5.5 8.5h3.4v4h-3.4" fill="#fff" stroke="#222" stroke-width="1"/><circle cx="7" cy="5.2" r="3.1" fill="#a8e8f0" stroke="#222" stroke-width="1.1"/><path d="M9.2 7.6l4 4.2" stroke="#111" stroke-width="1.8"/></svg>
<div class="abs" style="left:230.6px;top:37.4px;width:129.9px;height:15.4px;background:#fff;box-shadow:inset 0 0 0 1px #e2e2e2;border-left:1px solid #b8b8b8;box-sizing:border-box"></div>
<svg class="abs" style="left:233px;top:40px" width="11" height="10" viewBox="0 0 11 10" ><rect x=".5" y=".5" width="10" height="9" fill="#d6d6d6" stroke="#555" stroke-width="1"/><path d="M3 2v6M5.4 2v6M7.8 2v6M2 4.6h2M4.4 6h2M6.8 3.6h2" stroke="#222" stroke-width=".9"/></svg>
<div class="t" style="left:245.6px;top:40.6px;font-size:9px;color:#111;font-weight:normal;font-family:'Liberation Sans',sans-serif;transform:scaleX(0.894);transform-origin:0 0;">Stochastic Oscillator</div>
<svg class="abs" style="left:351px;top:42px" width="9" height="6" viewBox="0 0 9 6" ><path d="M1.2 1l3.3 3.4L7.8 1" fill="none" stroke="#444" stroke-width="1"/></svg>
<svg class="abs" style="left:368px;top:38px" width="13" height="14" viewBox="0 0 13 14" ><rect x="2" y="1.4" width="8.4" height="11" rx="2" fill="#c8c8c8" stroke="#222" stroke-width="1.2"/><circle cx="6.2" cy="6" r="2.2" fill="#e8d800" stroke="#222" stroke-width=".8"/><path d="M3.4 11.4c.6-2.4 5-2.4 5.6 0" fill="#222"/></svg>
<svg class="abs" style="left:386px;top:38px" width="13" height="14" viewBox="0 0 13 14" ><circle cx="6.5" cy="4.6" r="2.6" fill="#cfcfcf" stroke="#777" stroke-width=".9"/><path d="M3.4 3.6l3-2.4 3.4 2.2z" fill="#334"/><path d="M1.4 13c.4-3.6 2.4-4.6 5.1-4.6s4.7 1 5.1 4.6z" fill="#d8d8d8" stroke="#999" stroke-width=".8"/></svg>
<div class="t" style="left:405.5px;top:38.5px;font-size:12px;color:#111;font-weight:normal;font-family:'Liberation Serif',serif;"><i>f</i></div>
<div class="t" style="left:410.4px;top:44.3px;font-size:5.5px;color:#111;font-weight:normal;font-family:'Liberation Sans',sans-serif;">(x)</div>
<svg class="abs" style="left:422px;top:38px" width="13" height="14" viewBox="0 0 13 14" ><path d="M6.2 .8l2.400.8-1.800 5.800-2.400-.8z" fill="#111"/><path d="M5.400 7.200l-1 2.600h3.600l-.6-2z" fill="#111"/><path d="M3.400 9.600h5.600v1.200h-5.600z" fill="#111"/><path d="M9.200 4.400c1.800 1.800 1.800 5-.4 7" fill="none" stroke="#111" stroke-width="1.200"/><path d="M1.200 12.400h10.800" stroke="#111" stroke-width="1.700"/><rect x="6.800" y="10.600" width="3.600" height="1.300" fill="#d8c400"/></svg>
<div class="t" style="left:442.4px;top:39.6px;font-size:10.5px;color:#149414;font-weight:bold;font-family:'Liberation Sans',sans-serif;">S</div>
<svg class="abs" style="left:458px;top:39px" width="14" height="12" viewBox="0 0 14 12" ><path d="M1 11V6.5L3 2h2.6l.6 3.2h1.6L8.4 2H11l2 4.5V11H8.6V7.4H5.4V11z" fill="#111"/></svg>
<svg class="abs" style="left:475px;top:38px" width="15" height="14" viewBox="0 0 15 14" ><path d="M1.2 1v9l2.2-2 1.6 3.6 1.5-.7L4.9 7.4h3z" fill="#111"/><path d="M8.6 4.2c0-3.6 5.2-3.6 5.2-.4 0 2-2.4 2.2-2.4 4.2" fill="none" stroke="#1a1a9a" stroke-width="1.8"/><rect x="10.4" y="9.6" width="2" height="2" fill="#1a1a9a"/></svg>
<svg class="abs" style="left:508px;top:39px" width="15" height="12" viewBox="0 0 15 12" ><rect x="1" y="1" width="7" height="5.6" fill="#fff" stroke="#1e1e96" stroke-width="1.2"/><rect x="1" y="1" width="7" height="2" fill="#1e1e96"/><rect x="3.4" y="3" width="7" height="5.6" fill="#fff" stroke="#1e1e96" stroke-width="1.2"/><rect x="3.4" y="3" width="7" height="2" fill="#1e1e96"/><rect x="6" y="5.2" width="7.6" height="5.8" fill="#fff" stroke="#1e1e96" stroke-width="1.2"/><rect x="6" y="5.2" width="7.6" height="2.2" fill="#1e1e96"/></svg>
<svg class="abs" style="left:527.5px;top:39px" width="13" height="12" viewBox="0 0 13 12" ><rect x=".8" y=".8" width="11.4" height="10.4" fill="#fff" stroke="#1e1e96" stroke-width="1.3"/><path d="M6.5 1v10" stroke="#1e1e96" stroke-width="1.3"/><path d="M1 1.6h11" stroke="#1e1e96" stroke-width="1.6"/></svg>
<svg class="abs" style="left:545px;top:39px" width="13" height="12" viewBox="0 0 13 12" ><rect x=".8" y=".8" width="11.4" height="10.4" fill="#fff" stroke="#1e1e96" stroke-width="1.3"/><path d="M1 1.8h11M1 6.4h11" stroke="#1e1e96" stroke-width="2"/></svg>
<svg class="abs" style="left:563.5px;top:39px" width="13" height="12" viewBox="0 0 13 12" ><rect x=".8" y=".8" width="11.4" height="10.4" fill="#fff" stroke="#1e1e96" stroke-width="1.3"/><path d="M6.5 1v10M1 6.2h11" stroke="#1e1e96" stroke-width="1.4"/><path d="M1 1.6h11" stroke="#1e1e96" stroke-width="1.6"/></svg>
<svg class="abs" style="left:581.5px;top:39px" width="13" height="12" viewBox="0 0 13 12" ><rect x=".8" y=".8" width="11.4" height="10.4" fill="#fff" stroke="#1e1e96" stroke-width="1.3"/><path d="M6.5 1v10M1 6.2h11" stroke="#1e1e96" stroke-width="1.2"/><path d="M1 1.6h11" stroke="#1e1e96" stroke-width="1.6"/><circle cx="6.2" cy="5.8" r="2.7" fill="#e6da00" stroke="#665" stroke-width=".7"/><circle cx="6.2" cy="5.8" r=".9" fill="#443"/><circle cx="9" cy="3.4" r=".9" fill="#e02020"/></svg>
<div class="abs" style="left:24px;top:55.6px;width:995.4px;height:0.8px;background:#7f8a96;"></div>
<div class="abs" style="left:24px;top:72.5px;width:995.4px;height:1.0px;background:#6e6e6e;"></div>
<svg class="abs" style="left:26px;top:59px" width="16" height="12" viewBox="0 0 16 12" ><rect x=".6" y=".9" width="14.4" height="9.6" fill="#fff" stroke="#222" stroke-width="1.1"/><rect x=".6" y=".6" width="14.4" height="1.8" fill="#555"/></svg>
<div class="t" style="left:42.8px;top:57.9px;font-size:9px;color:#000;font-weight:normal;font-family:'Liberation Sans',sans-serif;transform:scaleX(0.9);transform-origin:0 0;">NGXASI</div>
<div class="t" style="left:76.2px;top:57.9px;font-size:9px;color:#e8101c;font-weight:normal;font-family:'Liberation Sans',sans-serif;transform:scaleX(0.904);transform-origin:0 0;">(102,042.3, 102,062.1, 101,585.7, 101,707.7, -334.617)</div>
<div class="abs" style="left:985.4px;top:57.6px;width:14px;height:12.6px;background:#ececec;box-shadow:inset -1px -1px 0 #8c8c8c, inset 1px 1px 0 #fff, 0 0 0 .5px #bbb"></div>
<div class="abs" style="left:1001.8px;top:57.6px;width:14px;height:12.6px;background:#ececec;box-shadow:inset -1px -1px 0 #8c8c8c, inset 1px 1px 0 #fff, 0 0 0 .5px #bbb"></div>
<svg class="abs" style="left:985.4px;top:57.6px" width="14" height="12.6" viewBox="0 0 14 12.6" ><path d="M5.2 2.8h5v3.6h-1.6M5.2 3.4h5" fill="none" stroke="#111" stroke-width="1.1"/><rect x="3.2" y="5.4" width="5" height="3.8" fill="#fff" stroke="#111" stroke-width="1"/><path d="M3.2 5.8h5" stroke="#111" stroke-width="1.2"/></svg>
<svg class="abs" style="left:1001.8px;top:57.6px" width="14" height="12.6" viewBox="0 0 14 12.6" ><path d="M3.8 3.2l6 6M9.8 3.2l-6 6" stroke="#000" stroke-width="1.5"/></svg>
<div class="abs" style="left:3px;top:58.4px;width:18px;height:1px;background:#bdbdbd;"></div>
<div class="abs" style="left:20.4px;top:57.6px;width:1px;height:1.8px;background:#bdbdbd;"></div>
<div class="abs" style="left:3.2px;top:66px;width:17.8px;height:14.6px;background:#cce4f7;box-shadow:inset 0 0 0 1px #a6d2f5"></div>
<svg class="abs" style="left:6px;top:68px" width="12" height="12" viewBox="0 0 12 12" ><path d="M3.2 1v8.6l2-1.8 1.4 3 1.4-.6-1.4-3h2.8z" fill="#fff" stroke="#222" stroke-width=".9" stroke-linejoin="round"/></svg>
<svg class="abs" style="left:6px;top:85px" width="11" height="11" viewBox="0 0 11 11" ><path d="M5.2.8v9.4M.6 5.4h9.6" stroke="#222" stroke-width="1"/></svg>
<div class="abs" style="left:5px;top:100px;width:14.5px;height:0.9px;background:#bdbdbd;"></div>
<svg class="abs" style="left:6px;top:105px" width="12" height="11" viewBox="0 0 12 11" ><path d="M1 1.2l9.8 8.6" stroke="#222" stroke-width="1"/></svg>
<div class="abs" style="left:7px;top:126.8px;width:10px;height:1px;background:#222;"></div>
<div class="abs" style="left:11.6px;top:138.5px;width:1px;height:10px;background:#222;"></div>
<svg class="abs" style="left:6px;top:154px" width="12" height="12" viewBox="0 0 12 12" ><path d="M1 9.6l9.6-8" stroke="#222" stroke-width="1"/><text x="0.6" y="11" font-size="5.5" font-weight="bold" font-family="Liberation Sans" fill="#111">s</text><text x="6.4" y="6" font-size="5.5" font-weight="bold" font-family="Liberation Sans" fill="#111">L</text><path d="M1 3l3 2.4M7.6 7l2.6 2.2" stroke="#222" stroke-width=".8"/></svg>
<div class="abs" style="left:3px;top:169.4px;width:18px;height:1px;background:#bdbdbd;"></div>
<div class="abs" style="left:20.4px;top:168.6px;width:1px;height:1.8px;background:#bdbdbd;"></div>
<div class="abs" style="left:5px;top:187.4px;width:15px;height:10px;background:#f6f6f6;box-shadow:inset 0 0 0 1px #9a9a9a"></div>
<div class="abs" style="left:12.2px;top:187.4px;width:0.9px;height:10px;background:#9a9a9a;"></div>
<svg class="abs" style="left:5px;top:187.4px" width="15" height="10" viewBox="0 0 15 10" ><path d="M6 3.2v3.6L3.8 5zM9.4 3.2v3.6L11.6 5z" fill="#111"/></svg>
<div class="abs" style="left:5px;top:202.6px;width:14.5px;height:0.9px;background:#bdbdbd;"></div>
<svg class="abs" style="left:6px;top:207px" width="12" height="11" viewBox="0 0 12 11" ><path d="M1 2.8h10" stroke="#1818d0" stroke-width="1.4"/><path d="M1 5.6h10" stroke="#e01010" stroke-width="1.4"/><path d="M1 8.4h10" stroke="#1818d0" stroke-width="1.4"/><path d="M3.4 9.8l5-8.6" stroke="#108010" stroke-width="1"/></svg>
<div class="abs" style="left:5px;top:222.4px;width:14.5px;height:0.9px;background:#bdbdbd;"></div>
<svg class="abs" style="left:6px;top:229px" width="12" height="9" viewBox="0 0 12 9" ><path d="M1 8.4a5 5 0 0 1 10 0M2.8 8.4a3.2 3.2 0 0 1 6.4 0M4.6 8.4a1.4 1.4 0 0 1 2.8 0" fill="none" stroke="#222" stroke-width=".9"/></svg>
<svg class="abs" style="left:6px;top:246px" width="12" height="11" viewBox="0 0 12 11" ><path d="M1 10l10-8.6M1 10l10-5.4M1 10l10-2.2M1 10h6" stroke="#222" stroke-width=".9"/></svg>
<svg class="abs" style="left:5.5px;top:262px" width="13" height="11" viewBox="0 0 13 11" ><path d="M1 1h11M1 3.6h6M1 6.2h6M1 8.8h6" stroke="#222" stroke-width=".8"/><text x="7.4" y="10.4" font-size="7" font-weight="bold" font-family="Liberation Sans" fill="#111">P</text></svg>
<svg class="abs" style="left:5.5px;top:278.5px" width="13" height="11" viewBox="0 0 13 11" ><path d="M1 1h11M1 3.6h6M1 6.2h6M1 8.8h6" stroke="#222" stroke-width=".8"/><text x="7.2" y="10.4" font-size="7" font-weight="bold" font-family="Liberation Sans" fill="#111">R</text></svg>
<svg class="abs" style="left:6px;top:294px" width="12" height="12" viewBox="0 0 12 12" ><path d="M1.4 1v10M3.4 1v10M5.8 1v10M8.4 1v10M11 1v10" stroke="#222" stroke-width=".9"/></svg>
<div class="abs" style="left:5px;top:310px;width:14.5px;height:0.9px;background:#bdbdbd;"></div>
<svg class="abs" style="left:6px;top:316px" width="12" height="11" viewBox="0 0 12 11" ><path d="M1 10l10-9" stroke="#222" stroke-width="1"/></svg>
<svg class="abs" style="left:6px;top:332px" width="12" height="12" viewBox="0 0 12 12" ><path d="M1 11l10-9.6M1 11l10-6M1 11l10-2.6M1 11l7.4-9.4" stroke="#222" stroke-width="1"/></svg>
<svg class="abs" style="left:6px;top:348px" width="12" height="12" viewBox="0 0 12 12" ><path d="M1 1l10 10M11 1l-10 10M1 6l5-5 5 5-5 5zM3.5 1l7.5 7.5M1 3.5l7.5 7.5M8.5 1l-7.5 7.5M11 3.5l-7.5 7.5" stroke="#333" stroke-width=".7" fill="none"/></svg>
<div class="abs" style="left:3px;top:366.6px;width:18px;height:0.9px;background:#bdbdbd;"></div>
<svg class="abs" style="left:26px;top:527.4px" width="8" height="10" viewBox="0 0 8 10" ><path d="M5.4 1.6L1.8 4.6l3.600 3" fill="none" stroke="#444" stroke-width="1.4"/></svg>
<div class="abs" style="left:697px;top:526.8px;width:187.2px;height:10.4px;background:#cdcdcd;"></div>
<svg class="abs" style="left:888px;top:527px" width="8" height="10" viewBox="0 0 8 10" ><path d="M1.6 1.8l3.8 3.2-3.8 3.2" fill="none" stroke="#333" stroke-width="1.2"/></svg>
<div class="abs" style="left:898.8000000000001px;top:527px;width:0.9px;height:9.8px;background:#777;"></div>
<div class="abs" style="left:928.5px;top:527px;width:0.9px;height:9.8px;background:#777;"></div>
<div class="abs" style="left:983.8000000000001px;top:527px;width:0.9px;height:9.8px;background:#777;"></div>
<svg class="abs" style="left:904px;top:527px" width="7" height="10" viewBox="0 0 7 10" ><path d="M4.8 2.6c-3-.8-3.6 2-2 3M2.2 7.4c3 .8 3.6-2 2-3" fill="none" stroke="#111" stroke-width="1.1"/><path d="M3.6 1l2 1.6-2 1.4zM3.4 9l-2-1.6 2-1.4z" fill="#111"/></svg>
<div class="t" style="left:916.8px;top:527.6px;font-size:9.6px;color:#111;font-weight:normal;font-family:'Liberation Serif',serif;transform:scaleX(0.9);transform-origin:0 0;-webkit-text-stroke:.3px #111;">D</div>
<svg class="abs" style="left:934px;top:527.4px" width="7" height="10" viewBox="0 0 7 10" ><path d="M3.4 1.4L5.2 3.6H1.6zM3.4 8.2L5.2 6H1.6z" fill="#111" stroke="#111" stroke-width=".5"/><path d="M3.4 2.4v5M1.8 4.8h3.2" stroke="#111" stroke-width=".9"/></svg>
<svg class="abs" style="left:946.6px;top:527.6px" width="9" height="9" viewBox="0 0 9 9" ><path d="M4.2 1L5.3 2.4H3.1zM4.2 8L5.3 6.6H3.1zM.8 4.5L2.2 3.4v2.2zM7.6 4.5L6.2 3.4v2.2z" fill="#111" stroke="#111" stroke-width=".3"/><path d="M4.2 2v5M1.6 4.5h5.2" stroke="#111" stroke-width=".9"/></svg>
<svg class="abs" style="left:959px;top:527.6px" width="9" height="9" viewBox="0 0 9 9" ><circle cx="4.2" cy="4.4" r="3.1" fill="none" stroke="#222" stroke-width=".9"/><path d="M2.6 4.4h3.2" stroke="#222" stroke-width="1"/></svg>
<svg class="abs" style="left:971.6px;top:527.6px" width="9" height="9" viewBox="0 0 9 9" ><circle cx="4.2" cy="4.4" r="3.1" fill="none" stroke="#222" stroke-width=".9"/><path d="M2.6 4.4h3.2M4.2 2.8v3.2" stroke="#222" stroke-width="1"/></svg>
<svg class="abs" style="left:989px;top:527.6px" width="20" height="9" viewBox="0 0 20 9" ><path d="M5.8 0.6v7.6L1.2 4.4zM14.4.6v7.6L19 4.4z" fill="#000"/></svg>
<svg class="abs" style="left:1014.6px;top:527.6px" width="6" height="9" viewBox="0 0 6 9" ><path d="M.8 1.2h5M.8 1.2v7h5" fill="none" stroke="#222" stroke-width="1.2"/><path d="M.8 2.4h5" stroke="#222" stroke-width="1"/></svg>
<div class="abs" style="left:2px;top:538px;width:21px;height:0.9px;background:#b8b8b8;"></div>
<div class="abs" style="left:3.4px;top:540.5px;width:0.9px;height:18px;background:#c8c8c8;"></div>
<div class="abs" style="left:10.2px;top:543.3px;width:97.2px;height:14.1px;background:#fff;box-shadow:inset 0 0 0 1px #8a8a8a"></div>
<div class="abs" style="left:22.5px;top:550px;width:60.5px;height:1.1px;background:#222;"></div>
<svg class="abs" style="left:96.6px;top:547.6px" width="8" height="6" viewBox="0 0 8 6" ><path d="M1 1l3 3.2L7 1" fill="none" stroke="#444" stroke-width="1"/></svg>
<div class="abs" style="left:112px;top:543.3px;width:74.5px;height:14.1px;background:#fff;box-shadow:inset 0 0 0 1px #8a8a8a"></div>
<div class="abs" style="left:121px;top:550px;width:44px;height:1.1px;background:#222;"></div>
<svg class="abs" style="left:175.8px;top:547.6px" width="8" height="6" viewBox="0 0 8 6" ><path d="M1 1l3 3.2L7 1" fill="none" stroke="#444" stroke-width="1"/></svg>
<div class="abs" style="left:109.4px;top:541px;width:0.9px;height:17px;background:#bcbcbc;"></div>
<div class="abs" style="left:192px;top:541px;width:0.9px;height:17px;background:#bcbcbc;"></div>
<div class="abs" style="left:195.5px;top:541px;width:0.9px;height:17px;background:#bcbcbc;"></div>
<div class="abs" style="left:278.3px;top:541px;width:0.9px;height:17px;background:#bcbcbc;"></div>
<div class="abs" style="left:282.2px;top:541px;width:0.9px;height:17px;background:#bcbcbc;"></div>
<div class="abs" style="left:365.8px;top:541px;width:0.9px;height:17px;background:#bcbcbc;"></div>
<div class="abs" style="left:204.0px;top:544.2px;width:6px;height:5.4px;background:#000;"></div>
<div class="abs" style="left:204.0px;top:551.6px;width:6px;height:5.4px;background:#000080;"></div>
<div class="abs" style="left:211.6px;top:544.2px;width:6px;height:5.4px;background:#0000ff;"></div>
<div class="abs" style="left:211.6px;top:551.6px;width:6px;height:5.4px;background:#008080;"></div>
<div class="abs" style="left:219.2px;top:544.2px;width:6px;height:5.4px;background:#00ffff;"></div>
<div class="abs" style="left:219.2px;top:551.6px;width:6px;height:5.4px;background:#008000;"></div>
<div class="abs" style="left:226.9px;top:544.2px;width:6px;height:5.4px;background:#00ff00;"></div>
<div class="abs" style="left:226.9px;top:551.6px;width:6px;height:5.4px;background:#800080;"></div>
<div class="abs" style="left:234.5px;top:544.2px;width:6px;height:5.4px;background:#ff00ff;"></div>
<div class="abs" style="left:234.5px;top:551.6px;width:6px;height:5.4px;background:#800000;"></div>
<div class="abs" style="left:242.1px;top:544.2px;width:6px;height:5.4px;background:#ff0000;box-shadow:0 0 0 .5px #888"></div>
<div class="abs" style="left:242.1px;top:551.6px;width:6px;height:5.4px;background:#808000;"></div>
<div class="abs" style="left:249.7px;top:544.2px;width:6px;height:5.4px;background:#ffff00;"></div>
<div class="abs" style="left:249.7px;top:551.6px;width:6px;height:5.4px;background:#808080;"></div>
<div class="abs" style="left:257.3px;top:544.2px;width:6px;height:5.4px;background:#ffffff;box-shadow:0 0 0 .5px #888"></div>
<div class="abs" style="left:257.3px;top:551.6px;width:6px;height:5.4px;background:#c0c0c0;"></div>
<svg class="abs" style="left:266.6px;top:548.6px" width="6" height="4" viewBox="0 0 6 4" ><path d="M.8.6h4.4L3 3.2z" fill="#111"/></svg>
<svg class="abs" style="left:292.2px;top:544px" width="12.4" height="12.4" viewBox="0 0 12.4 12.4" ><defs><linearGradient id="eg" x1="0" y1="1" x2="1" y2="0"><stop offset="0" stop-color="#0a5bc4"/><stop offset=".55" stop-color="#1b9de2"/><stop offset="1" stop-color="#5ad36a"/></linearGradient></defs><circle cx="6.2" cy="6.2" r="6" fill="url(#eg)"/><path d="M12 7.2c0 2-2 3.6-4.2 3.2-2-.4-3-2.2-2.6-3.800 .4-1.6 2.200-2.400 3.600-1.800-1 .2-1.400 1.200-1 2 .6 1.400 3 1.400 4.200 .4z" fill="#f0f0f0"/></svg>
<svg class="abs" style="left:310.2px;top:544px" width="12.4" height="12.4" viewBox="0 0 12.4 12.4" ><defs><linearGradient id="eg" x1="0" y1="1" x2="1" y2="0"><stop offset="0" stop-color="#0a5bc4"/><stop offset=".55" stop-color="#1b9de2"/><stop offset="1" stop-color="#5ad36a"/></linearGradient></defs><circle cx="6.2" cy="6.2" r="6" fill="url(#eg)"/><path d="M12 7.2c0 2-2 3.6-4.2 3.2-2-.4-3-2.2-2.6-3.800 .4-1.6 2.200-2.400 3.600-1.800-1 .2-1.400 1.200-1 2 .6 1.400 3 1.400 4.200 .4z" fill="#f0f0f0"/></svg>
<svg class="abs" style="left:328.3px;top:544px" width="12.4" height="12.4" viewBox="0 0 12.4 12.4" ><defs><linearGradient id="eg" x1="0" y1="1" x2="1" y2="0"><stop offset="0" stop-color="#0a5bc4"/><stop offset=".55" stop-color="#1b9de2"/><stop offset="1" stop-color="#5ad36a"/></linearGradient></defs><circle cx="6.2" cy="6.2" r="6" fill="url(#eg)"/><path d="M12 7.2c0 2-2 3.6-4.2 3.2-2-.4-3-2.2-2.6-3.800 .4-1.6 2.200-2.400 3.600-1.800-1 .2-1.400 1.200-1 2 .6 1.400 3 1.400 4.200 .4z" fill="#f0f0f0"/></svg>
<svg class="abs" style="left:345.90000000000003px;top:544px" width="12.4" height="12.4" viewBox="0 0 12.4 12.4" ><defs><linearGradient id="eg" x1="0" y1="1" x2="1" y2="0"><stop offset="0" stop-color="#0a5bc4"/><stop offset=".55" stop-color="#1b9de2"/><stop offset="1" stop-color="#5ad36a"/></linearGradient></defs><circle cx="6.2" cy="6.2" r="6" fill="url(#eg)"/><path d="M12 7.2c0 2-2 3.6-4.2 3.2-2-.4-3-2.2-2.6-3.800 .4-1.6 2.200-2.400 3.600-1.800-1 .2-1.400 1.200-1 2 .6 1.400 3 1.400 4.200 .4z" fill="#f0f0f0"/></svg>
<div class="abs" style="left:816.7px;top:562px;width:0.8px;height:10px;background:#dedede;"></div>
<div class="abs" style="left:857.6px;top:562px;width:0.8px;height:10px;background:#dedede;"></div>
<div class="abs" style="left:911.7px;top:562px;width:0.8px;height:10px;background:#dedede;"></div>
<div class="abs" style="left:930.5px;top:562px;width:0.8px;height:10px;background:#dedede;"></div>
<div class="abs" style="left:960.5px;top:562px;width:0.8px;height:10px;background:#dedede;"></div>
<div class="abs" style="left:979.2px;top:562px;width:0.8px;height:10px;background:#dedede;"></div>
<div class="abs" style="left:1005.5px;top:562px;width:0.8px;height:10px;background:#dedede;"></div>
<div class="t" style="left:768px;top:564.2px;font-size:8.6px;color:#333;font-weight:normal;font-family:'Liberation Sans',sans-serif;transform:scaleX(0.93);transform-origin:0 0;">03/11/2023</div>
<div class="t" style="left:863px;top:568.6px;font-size:8.6px;color:#555;font-weight:normal;font-family:'Liberation Sans',sans-serif;transform:scaleX(0.93);transform-origin:0 0;">191</div>
<svg class="abs" style="left:0;top:0;filter:blur(.5px)" width="1024" height="572" viewBox="0 0 1024 572"><path d="M0 561L10 563.2L50 565L256 566.3L400 568.4L470 565.2L540 563.4L600 565.5L656 568L768 572.5L0 572.5Z" fill="#fff"/><path d="M813 570.5L1021 564L1021 573L813 573Z" fill="#fff"/></svg>
<div class="abs" style="left:1019.6px;top:0px;width:4.4px;height:572px;background:#fff;"></div>
<div class="abs" style="left:0px;top:0px;width:2px;height:572px;background:#fff;"></div>
<svg class="abs" style="left:1018px;top:0" width="6" height="572" viewBox="0 0 6 572"><path d="M2.6 6C3.4 9 5.8 13 5.6 22C5.400 40 4.600 70 3.800 87.500C3.300 70 3 30 2.600 6Z" fill="#000"/><path d="M2.9 170V191" stroke="#111" stroke-width=".6"/><path d="M3.1 190V210" stroke="#000" stroke-width="1"/><path d="M2.6 209.400H4.500V386H2.600Z" fill="#000"/><path d="M3 386V446" stroke="#222" stroke-width=".8"/><path d="M3 446V560" stroke="#d8d8d8" stroke-width=".7"/></svg>
</body></html>
